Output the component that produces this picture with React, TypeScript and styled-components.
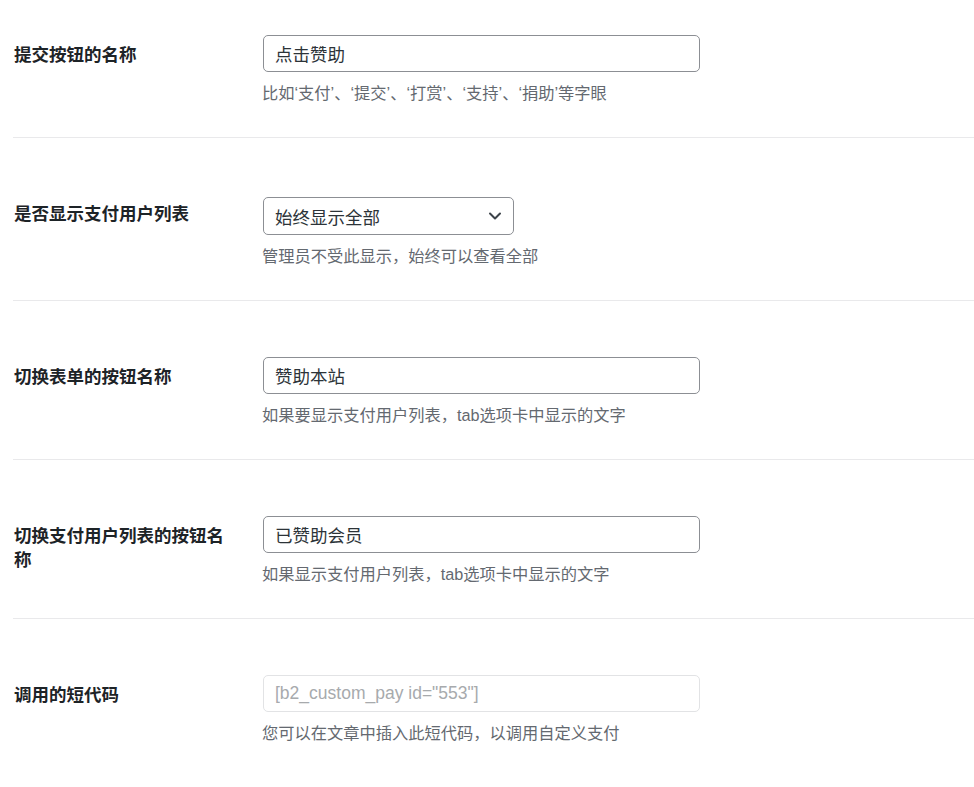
import React from 'react';
import styled, { createGlobalStyle } from 'styled-components';

const GlobalStyle = createGlobalStyle`
  html, body {
    margin: 0;
    padding: 0;
    background: #ffffff;
  }
  body {
    font-family: "Liberation Sans", "Noto Sans CJK SC", sans-serif;
    color: #1d2327;
  }
`;

const FormWrapper = styled.div`
  padding-left: 13px;
  display: flex;
  flex-direction: column;
`;

const Row = styled.div<{ $first?: boolean; $last?: boolean }>`
  display: flex;
  align-items: flex-start;
  padding-top: ${(p) => (p.$first ? '35px' : '56px')};
  padding-bottom: 32px;
  border-bottom: ${(p) => (p.$last ? 'none' : '1px solid #e9e9eb')};
`;

const Label = styled.div`
  flex: 0 0 250px;
  box-sizing: border-box;
  padding: 8px 28px 0 1px;
  font-size: 17.5px;
  line-height: 24px;
  font-weight: 700;
  color: #1d2327;
`;

const Field = styled.div`
  display: flex;
  flex-direction: column;
  align-items: flex-start;
`;

const TextInput = styled.input`
  box-sizing: border-box;
  width: 437px;
  height: 37px;
  margin: 0;
  padding: 0 11px;
  border: 1px solid ${(p) => (p.readOnly ? '#e2e3e5' : '#8c8f94')};
  border-radius: 5px;
  background: #ffffff;
  font-family: "Liberation Sans", "Noto Sans CJK SC", sans-serif;
  font-size: 17.5px;
  color: ${(p) => (p.readOnly ? '#a7aaad' : '#2c3338')};
  outline: none;
`;

const SelectBox = styled.div`
  box-sizing: border-box;
  width: 251px;
  height: 38px;
  margin-top: 3px;
  padding: 0 10px 0 11px;
  border: 1px solid #8c8f94;
  border-radius: 5px;
  display: flex;
  align-items: center;
  justify-content: space-between;
  font-size: 17.5px;
  color: #2c3338;
`;

const Chevron = styled.svg`
  width: 14px;
  height: 14px;
  margin-right: 1px;
`;

const Description = styled.p`
  margin: 9px 0 0 -1px;
  font-size: 16.25px;
  line-height: 24px;
  color: #646970;
`;

type FieldDef = {
  label: string;
  value: string;
  desc: string;
  kind: 'input' | 'select' | 'readonly';
};

const fields: FieldDef[] = [
  {
    label: '提交按钮的名称',
    value: '点击赞助',
    desc: '比如‘支付’、‘提交’、‘打赏’、‘支持’、‘捐助’等字眼',
    kind: 'input',
  },
  {
    label: '是否显示支付用户列表',
    value: '始终显示全部',
    desc: '管理员不受此显示，始终可以查看全部',
    kind: 'select',
  },
  {
    label: '切换表单的按钮名称',
    value: '赞助本站',
    desc: '如果要显示支付用户列表，tab选项卡中显示的文字',
    kind: 'input',
  },
  {
    label: '切换支付用户列表的按钮名称',
    value: '已赞助会员',
    desc: '如果显示支付用户列表，tab选项卡中显示的文字',
    kind: 'input',
  },
  {
    label: '调用的短代码',
    value: '[b2_custom_pay id="553"]',
    desc: '您可以在文章中插入此短代码，以调用自定义支付',
    kind: 'readonly',
  },
];

function Control({ field }: { field: FieldDef }) {
  if (field.kind === 'select') {
    return (
      <SelectBox>
        <span>{field.value}</span>
        <Chevron viewBox="0 0 14 14" fill="none">
          <path d="M2 4.5 L7 9.5 L12 4.5" stroke="#3c434a" strokeWidth="2" strokeLinecap="round" strokeLinejoin="round" />
        </Chevron>
      </SelectBox>
    );
  }
  return <TextInput defaultValue={field.value} readOnly={field.kind === 'readonly'} />;
}

export default function App() {
  return (
    <>
      <GlobalStyle />
      <FormWrapper>
        {fields.map((field, i) => (
          <Row key={field.label} $first={i === 0} $last={i === fields.length - 1}>
            <Label>{field.label}</Label>
            <Field>
              <Control field={field} />
              <Description>{field.desc}</Description>
            </Field>
          </Row>
        ))}
      </FormWrapper>
    </>
  );
}
